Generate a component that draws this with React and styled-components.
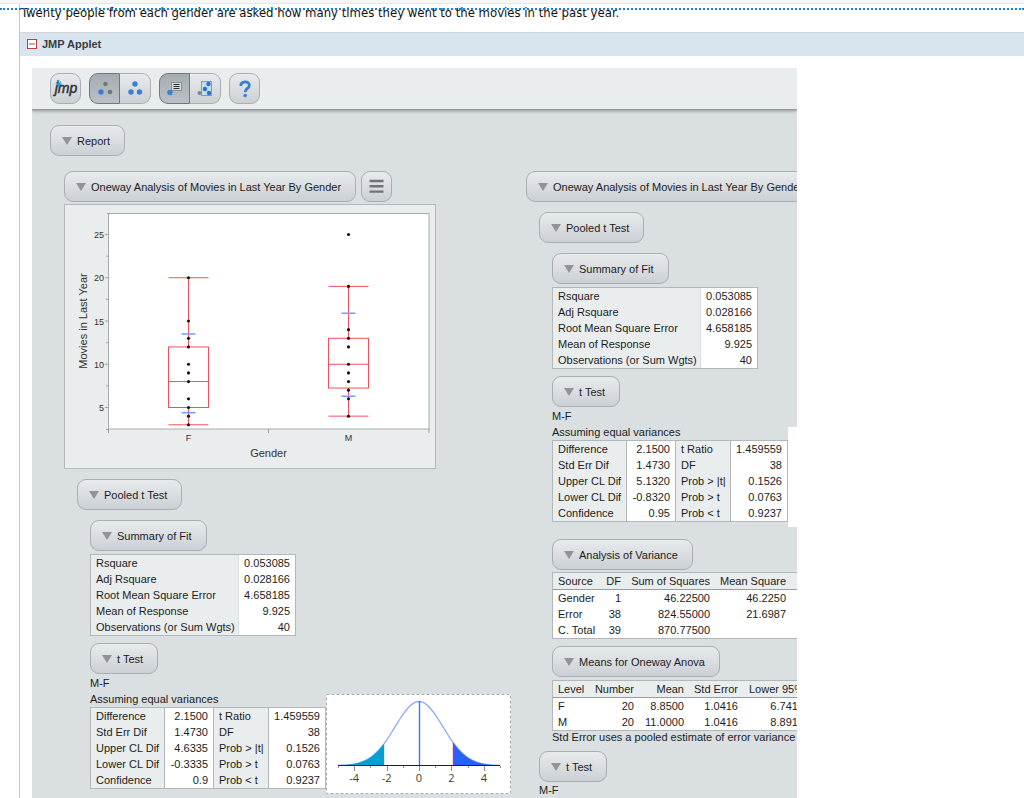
import React from "react";
import styled, { createGlobalStyle, css } from "styled-components";

const color = {
  body: "#dadfe1",
  pale: "#e9edee",
  line: "#b2b7ba",
  text: "#1c1c1c",
};

const GlobalStyle = createGlobalStyle`
  *, *::before, *::after { box-sizing: border-box; }
  body {
    margin: 0;
    background: #fff;
    font-family: "Liberation Sans", Arial, sans-serif;
    font-size: 11px;
    line-height: 16px;
    color: ${color.text};
  }
  button { font: inherit; color: inherit; margin: 0; }
`;

const Page = styled.div`
  position: relative;
  height: 100vh;
  overflow: hidden;
  display: flex;
  flex-direction: column;
`;

const TopStrip = styled.div`
  flex: none;
  height: 4px;
  background: #f6f6f6;
  border-bottom: 1px solid #e8e8e8;
`;

const DottedRule = styled.div`
  position: absolute;
  z-index: 1;
  top: 8px;
  left: 0;
  width: 100%;
  border-top: 2px dotted #1482da;
`;

const Content = styled.main`
  flex: 1;
  min-height: 0;
  margin-left: 19px;
  border-left: 1px solid #c9c9c9;
  display: flex;
  flex-direction: column;
`;

const Intro = styled.p`
  flex: none;
  margin: 0;
  height: 28px;
  padding: 0 1px;
  font-family: "DejaVu Sans Condensed", "DejaVu Sans", Verdana, sans-serif;
  font-size: 13px;
  line-height: 18px;
  color: #111;
`;

const SectionBar = styled.header`
  flex: none;
  display: flex;
  align-items: center;
  gap: 5px;
  height: 24px;
  padding: 0 7px 2px;
  background: #d9e5ee;
  border-top: 1px solid #d3d6d8;
`;

const Collapse = styled.button`
  display: flex;
  padding: 0;
  border: 0;
  background: none;
`;

const SectionTitle = styled.h2`
  margin: 0;
  font-size: 11px;
  line-height: 16px;
  color: #3a3d40;
`;

const Applet = styled.section`
  flex: 1;
  min-height: 0;
  margin: 12px 12px 0;
  max-width: 765px;
  overflow: hidden;
  background: ${color.body};
`;

const Toolbar = styled.div`
  position: relative;
  display: flex;
  gap: 8px;
  padding: 5px 18px;
  background: ${color.pale};
  border-bottom: 1px solid #94999c;
  box-shadow: 0 1px 3px rgba(60, 66, 70, 0.5);
`;

const raised = css`
  border: 1px solid #a9aeb3;
  background: linear-gradient(#e8ebed, #cbd0d5);
`;

const ToolButton = styled.button`
  ${raised}
  display: flex;
  align-items: center;
  justify-content: center;
  width: 31px;
  height: 31px;
  padding: 0;
  border-radius: 9px;
  ${(p) => p.$side === "left" && "border-radius: 9px 0 0 9px;"}
  ${(p) => p.$side === "right" && "border-radius: 0 9px 9px 0; border-left: 0;"}
  ${(p) =>
    p.$pressed &&
    "background: linear-gradient(#a5acb2, #b9c0c6); border-color: #72777b;"}
`;

const Group = styled.div`
  display: flex;
`;

const Report = styled.div`
  padding: 15px 18px 0;
`;

const Columns = styled.div`
  display: flex;
  margin: 15px 0 0 14px;
`;

const Column = styled.div`
  flex: none;
  width: 462px;
`;

const Indent = styled.div`
  margin-left: 13px;
  padding-top: ${(p) => p.$gap || 0}px;
`;

const Line = styled.div`
  display: flex;
  gap: 5px;
`;

const OutlineButton = styled.button`
  ${raised}
  display: flex;
  align-items: center;
  gap: 5px;
  height: 31px;
  padding: 0 14px 0 11px;
  border-radius: 9px;
  white-space: nowrap;
`;

const Block = styled.div`
  padding-top: ${(p) => p.$gap || 0}px;
`;

const Note = styled.div`
  line-height: ${(p) => p.$line || 16}px;
  white-space: nowrap;
`;

const TestRow = styled.div`
  display: flex;
  align-items: flex-end;
`;

const TestBody = styled.div`
  flex: none;
  padding-bottom: 5px;
`;

const Table = styled.table`
  table-layout: fixed;
  width: ${(p) => p.$width}px;
  border-collapse: separate;
  border-spacing: 0;
  border: 1px solid ${color.line};
  background: #fff;
`;

const LabelCell = styled.th`
  height: 16px;
  padding: 0 0 0 5px;
  font-weight: normal;
  text-align: left;
  white-space: nowrap;
  background: ${color.pale};
  border-right: 1px solid ${(p) => (p.$soft ? "#dadfe1" : color.line)};
`;

const ValueCell = styled.td`
  height: 16px;
  padding: 0 5px 0 0;
  text-align: right;
  white-space: nowrap;
  border-right: ${(p) => (p.$rule ? `1px solid ${color.line}` : "0")};
`;

const HeadCell = styled.th`
  height: 17px;
  padding: 0 5px;
  font-weight: normal;
  line-height: 16px;
  text-align: ${(p) => (p.$left ? "left" : "right")};
  white-space: nowrap;
  background: ${color.pale};
  border-bottom: 1px solid #989da0;
`;

const RowCell = styled.th`
  height: 16px;
  padding: 0 5px;
  font-weight: normal;
  text-align: left;
  white-space: nowrap;
`;

const Curve = styled.svg`
  flex: none;
  display: block;
  background: #fff;
`;

const Graph = styled.svg`
  display: block;
  margin-top: 2px;
  background: ${color.pale};
`;

function Outline({ children }) {
  return (
    <OutlineButton type="button">
      <svg width="10" height="8" viewBox="0 0 10 8" aria-hidden="true">
        <path d="M0 0H10L5 8Z" fill="#8f9496" />
      </svg>
      {children}
    </OutlineButton>
  );
}

const summary = [
  ["Rsquare", "0.053085"],
  ["Adj Rsquare", "0.028166"],
  ["Root Mean Square Error", "4.658185"],
  ["Mean of Response", "9.925"],
  ["Observations (or Sum Wgts)", "40"],
];

function SummaryTable() {
  return (
    <Table $width={206}>
      <colgroup>
        <col style={{ width: 148 }} />
        <col />
      </colgroup>
      <tbody>
        {summary.map(([label, value]) => (
          <tr key={label}>
            <LabelCell scope="row" $soft>{label}</LabelCell>
            <ValueCell>{value}</ValueCell>
          </tr>
        ))}
      </tbody>
    </Table>
  );
}

function TestTable({ upper, lower, confidence }) {
  const rows = [
    ["Difference", "2.1500", "t Ratio", "1.459559"],
    ["Std Err Dif", "1.4730", "DF", "38"],
    ["Upper CL Dif", upper, "Prob > |t|", "0.1526"],
    ["Lower CL Dif", lower, "Prob > t", "0.0763"],
    ["Confidence", confidence, "Prob < t", "0.9237"],
  ];
  return (
    <Table $width={236}>
      <colgroup>
        <col style={{ width: 74 }} />
        <col style={{ width: 49 }} />
        <col style={{ width: 55 }} />
        <col />
      </colgroup>
      <tbody>
        {rows.map(([a, b, c, d]) => (
          <tr key={a}>
            <LabelCell scope="row">{a}</LabelCell>
            <ValueCell $rule>{b}</ValueCell>
            <LabelCell scope="row">{c}</LabelCell>
            <ValueCell>{d}</ValueCell>
          </tr>
        ))}
      </tbody>
    </Table>
  );
}

function DataTable({ widths, head, rows }) {
  return (
    <Table $width={widths.reduce((a, b) => a + b, 2)}>
      <colgroup>
        {widths.map((w, i) => (
          <col key={i} style={{ width: w }} />
        ))}
      </colgroup>
      <thead>
        <tr>
          {head.map((h, i) => (
            <HeadCell key={i} scope="col" $left={i === 0}>
              {h}
            </HeadCell>
          ))}
        </tr>
      </thead>
      <tbody>
        {rows.map(([first, ...rest]) => (
          <tr key={first}>
            <RowCell scope="row">{first}</RowCell>
            {rest.map((v, i) => (
              <ValueCell key={i}>{v}</ValueCell>
            ))}
          </tr>
        ))}
      </tbody>
    </Table>
  );
}

const curveX = (t) => 93 + t * 16.2;
const curveY = (t) => 71.5 - 64 * Math.exp((-t * t) / (2 * 1.473 * 1.473));
const curvePoints = (from, to) => {
  const points = [];
  for (let i = 0; i <= 60; i += 1) {
    const t = from + ((to - from) * i) / 60;
    points.push(`${curveX(t).toFixed(2)},${curveY(t).toFixed(2)}`);
  }
  return points.join(" ");
};
const tail = (from, to) =>
  `${curveX(from)},71.5 ${curvePoints(from, to)} ${curveX(to)},71.5`;

function TCurve({ plain }) {
  return (
    <Curve width="185" height="100" viewBox="0 0 185 100" role="img" aria-label="t density">
      {!plain && (
        <rect x="0.5" y="0.5" width="184" height="99" fill="none" stroke="#a9adaf" strokeDasharray="3 2" />
      )}
      <polyline points={curvePoints(-5, 5)} fill="none" stroke="#8aaaff" strokeWidth="1.3" />
      <polygon points={tail(-5, -2.15)} fill="#05a0d2" />
      <polygon points={tail(2.15, 5)} fill="#2463ff" />
      {[-5, -4, -3, -2, -1, 0, 1, 2, 3, 4, 5].map((t) => (
        <path key={t} d={`M${Math.round(curveX(t)) + 0.5} 72v${t % 2 ? 2 : 5}`} stroke="#8b8f91" />
      ))}
      <path d="M12 71.5H174" stroke="#222" />
      <path d="M93.500 7V71" stroke="#3a74ff" strokeWidth="1.4" />
      <path d="M127.500 49V71" stroke="#c8307c" strokeWidth="1.4" />
      {!plain &&
        [-4, -2, 0, 2, 4].map((t) => (
          <text key={t} x={curveX(t)} y="88" textAnchor="middle" fontFamily="Open Sans, sans-serif" fontSize="11" fill="#3c3c3c">
            {t}
          </text>
        ))}
    </Curve>
  );
}

const gy = (v) => 30.5 + (25 - v) * 8.65;
const boxes = [
  { x: 124.5, name: "F", low: 3, q1: 5, med: 8, q3: 12, high: 20, sd: [4.4, 13.5], dots: [3, 4, 5, 6, 8, 9, 10, 12, 13, 15, 20] },
  { x: 284.5, name: "M", low: 4, q1: 7.25, med: 10, q3: 13, high: 19, sd: [6.3, 15.9], dots: [4, 6, 7, 8, 9, 10, 12, 13, 14, 19, 25] },
];

function BoxPlot() {
  return (
    <Graph width="372" height="265" viewBox="0 0 372 265" role="img" aria-label="Movies in Last Year by Gender">
      <rect x="0.5" y="0.5" width="371" height="264" fill="none" stroke="#b4b9bc" />
      <rect x="44.5" y="9.5" width="320.5" height="215.5" fill="#fff" stroke="#a6abae" />
      <g stroke="#9a9fa2">
        {[5, 10, 15, 20, 25].map((v) => (
          <path key={v} d={`M41 ${gy(v)}H44`} />
        ))}
        {[7.5, 12.5, 17.5, 22.5].map((v) => (
          <path key={v} d={`M42 ${gy(v)}H44`} />
        ))}
        <path d="M43 9.5H45M42 225.5H45M44.5 225V229M204.5 225V229M365 225V229" />
      </g>
      <g fontSize="9" fill="#333">
        {[5, 10, 15, 20, 25].map((v) => (
          <text key={v} x="40" y={gy(v) + 3.5} textAnchor="end">
            {v}
          </text>
        ))}
        {boxes.map((b) => (
          <text key={b.name} x={b.x} y="237" textAnchor="middle">
            {b.name}
          </text>
        ))}
      </g>
      <g fontSize="11" fill="#333" textAnchor="middle">
        <text x="204.5" y="253">Gender</text>
        <text transform="translate(23 117) rotate(-90)">Movies in Last Year</text>
      </g>
      {boxes.map((b) => (
        <g key={b.name} fill="none">
          <g stroke="#f2303f" strokeOpacity="0.85" strokeWidth="1">
            <rect x={b.x - 20} y={gy(b.q3)} width="40" height={gy(b.q1) - gy(b.q3)} />
            <path d={`M${b.x - 20} ${gy(b.med)}h40M${b.x - 20} ${gy(b.high)}h40M${b.x - 20} ${gy(b.low)}h40`} />
            <path d={`M${b.x} ${gy(b.high)}V${gy(b.q3)}M${b.x} ${gy(b.q1)}V${gy(b.low)}`} />
          </g>
          {b.sd.map((v) => (
            <path key={v} d={`M${b.x - 7} ${gy(v)}h14`} stroke="#7b9cf8" strokeWidth="1.5" />
          ))}
          {b.dots.map((v) => (
            <circle key={v} cx={b.x} cy={gy(v)} r="1.6" fill="#151515" />
          ))}
        </g>
      ))}
    </Graph>
  );
}

function TTest({ plainCurve, ...values }) {
  return (
    <>
      <Outline>t Test</Outline>
      <Block $gap={1}>
        <Note>M-F</Note>
        <TestRow>
          <TestBody>
            <Note>Assuming equal variances</Note>
            <TestTable {...values} />
          </TestBody>
          <TCurve plain={plainCurve} />
        </TestRow>
      </Block>
    </>
  );
}

function Tools() {
  return (
    <Toolbar>
      <ToolButton type="button" aria-label="JMP">
        <svg width="29" height="23" viewBox="0 0 29 23">
          <text x="15" y="16" fontSize="14" fontStyle="italic" fill="#2f3133" stroke="#2f3133" strokeWidth="0.5" textAnchor="middle">
            jmp
          </text>
          <path d="M4 6.5L7 6.500L10 4L9.500 7L12 8L9 8.500L7.500 11L7 8Z" fill="#1e96d2" />
          <circle cx="7" cy="4" r="1.200" fill="#1e96d2" />
        </svg>
      </ToolButton>
      <Group>
        <ToolButton type="button" aria-label="Select one" $side="left" $pressed>
          <svg width="16" height="16" viewBox="0 0 16 16">
            <circle cx="8.500" cy="3" r="2.300" fill="#737779" />
            <circle cx="4" cy="11" r="2.700" fill="#3b80d4" />
            <circle cx="13" cy="11" r="2.300" fill="#737779" />
          </svg>
        </ToolButton>
        <ToolButton type="button" aria-label="Select all" $side="right">
          <svg width="16" height="16" viewBox="0 0 16 16">
            <circle cx="8" cy="3" r="2.700" fill="#3b80d4" />
            <circle cx="4" cy="11" r="2.700" fill="#3b80d4" />
            <circle cx="12.500" cy="11" r="2.700" fill="#3b80d4" />
          </svg>
        </ToolButton>
      </Group>
      <Group>
        <ToolButton type="button" aria-label="Hover label" $side="left" $pressed>
          <svg width="18" height="18" viewBox="0 0 18 18">
            <path d="M4 12L8 8" stroke="#888" />
            <rect x="5.500" y="2.500" width="10" height="8" fill="#d8dbdc" stroke="#8b8f91" />
            <path d="M7.500 4.500h6M7.500 6.500h6M7.500 8.500h6" stroke="#2b2d2e" />
            <circle cx="4" cy="12.500" r="2.700" fill="#3b80d4" />
          </svg>
        </ToolButton>
        <ToolButton type="button" aria-label="Brush" $side="right">
          <svg width="18" height="18" viewBox="0 0 18 18">
            <rect x="5.500" y="1.500" width="10" height="14" fill="#c6dfed" stroke="#67a6cb" />
            <circle cx="12.500" cy="4" r="2.200" fill="#2e70ce" />
            <circle cx="9" cy="9" r="2.200" fill="#2e70ce" />
            <circle cx="13" cy="13" r="2.200" fill="#2e70ce" />
            <circle cx="3.500" cy="13" r="2" fill="#808486" />
          </svg>
        </ToolButton>
      </Group>
      <ToolButton type="button" aria-label="Help">
        <svg width="18" height="20" viewBox="0 0 18 20">
          <path d="M4.800 7C4.500 1.500 13.500 1.500 13.300 6.500C13.200 9.500 9.200 9.500 9.200 13" fill="none" stroke="#357fd3" strokeWidth="2.800" />
          <circle cx="9.200" cy="16.500" r="1.800" fill="#357fd3" />
        </svg>
      </ToolButton>
    </Toolbar>
  );
}

export default function App() {
  return (
    <>
      <GlobalStyle />
      <Page>
        <TopStrip />
        <DottedRule />
        <Content>
          <Intro>
            Twenty people from each gender are asked how many times they went to the movies in the past year.
          </Intro>
          <SectionBar>
            <Collapse type="button" aria-label="Collapse">
              <svg width="10" height="10" viewBox="0 0 10 10">
                <rect x="0.5" y="0.5" width="9" height="9" fill="#fff" stroke="#b5403f" />
                <path d="M2 5H8" stroke="#b5403f" />
              </svg>
            </Collapse>
            <SectionTitle>JMP Applet</SectionTitle>
          </SectionBar>
          <Applet>
            <Tools />
            <Report>
              <Outline>Report</Outline>
              <Columns>
                <Column>
                  <Line>
                    <Outline>Oneway Analysis of Movies in Last Year By Gender</Outline>
                    <ToolButton type="button" aria-label="Menu">
                      <svg width="16" height="16" viewBox="0 0 16 16">
                        <path d="M0.500 2h14M0.500 7.300h14M0.500 12.600h14" stroke="#6f7376" strokeWidth="2.400" />
                      </svg>
                    </ToolButton>
                  </Line>
                  <BoxPlot />
                  <Indent $gap={10}>
                    <Outline>Pooled t Test</Outline>
                    <Indent $gap={10}>
                      <Outline>Summary of Fit</Outline>
                      <Block $gap={3}>
                        <SummaryTable />
                      </Block>
                      <Block $gap={7}>
                        <TTest upper="4.6335" lower="-0.3335" confidence="0.9" />
                      </Block>
                    </Indent>
                  </Indent>
                </Column>
                <Column>
                  <Outline>Oneway Analysis of Movies in Last Year By Gender</Outline>
                  <Indent $gap={10}>
                    <Outline>Pooled t Test</Outline>
                    <Indent $gap={10}>
                      <Outline>Summary of Fit</Outline>
                      <Block $gap={3}>
                        <SummaryTable />
                      </Block>
                      <Block $gap={7}>
                        <TTest upper="5.1320" lower="-0.8320" confidence="0.95" plainCurve />
                      </Block>
                      <Block $gap={12}>
                        <Outline>Analysis of Variance</Outline>
                      </Block>
                      <Block $gap={2}>
                        <DataTable
                          widths={[47, 26, 89, 76, 50]}
                          head={["Source", "DF", "Sum of Squares", "Mean Square", ""]}
                          rows={[
                            ["Gender", "1", "46.22500", "46.2250", ""],
                            ["Error", "38", "824.55000", "21.6987", ""],
                            ["C. Total", "39", "870.77500", "", ""],
                          ]}
                        />
                      </Block>
                      <Block $gap={7}>
                        <Outline>Means for Oneway Anova</Outline>
                      </Block>
                      <Block $gap={3}>
                        <DataTable
                          widths={[36, 50, 50, 54, 66]}
                          head={["Level", "Number", "Mean", "Std Error", "Lower 95%"]}
                          rows={[
                            ["F", "20", "8.8500", "1.0416", "6.7413"],
                            ["M", "20", "11.0000", "1.0416", "8.8913"],
                          ]}
                        />
                        <Note $line={13}>Std Error uses a pooled estimate of error variance</Note>
                      </Block>
                    </Indent>
                    <Block $gap={7}>
                      <Outline>t Test</Outline>
                      <Note>M-F</Note>
                    </Block>
                  </Indent>
                </Column>
              </Columns>
            </Report>
          </Applet>
        </Content>
      </Page>
    </>
  );
}
